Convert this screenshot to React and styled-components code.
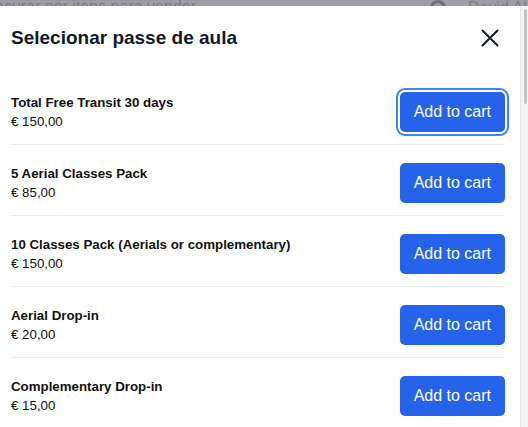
import React from 'react'
import styled, { createGlobalStyle } from 'styled-components'

const GlobalStyle = createGlobalStyle`
  html, body {
    margin: 0;
    padding: 0;
    background: #ffffff;
    font-family: "Liberation Sans", Arial, Helvetica, sans-serif;
  }
  * { box-sizing: border-box; }
`;

const Page = styled.div`
  width: 528px;
  height: 427px;
  overflow: hidden;
  display: flex;
  flex-direction: column;
  background: #9b9da4;
`;

const Backdrop = styled.div`
  height: 6px;
  flex: none;
  overflow: hidden;
  display: flex;
  align-items: flex-end;
  color: #7c7e86;
  font-size: 16px;
  line-height: 18px;
  filter: blur(0.5px);
  white-space: nowrap;
`;

const BackdropSearch = styled.span`
  margin-left: -5px;
  margin-bottom: -10px;
  flex: 1;
`;

const BackdropDot = styled.span`
  width: 16px;
  height: 16px;
  border-radius: 50%;
  border: 3px solid #6e7078;
  margin-bottom: -10px;
  margin-right: 22px;
`;

const BackdropUser = styled.span`
  margin-bottom: -11px;
  margin-right: -6px;
  width: 66px;
`;

const Modal = styled.div`
  flex: 1;
  display: flex;
  background: #ffffff;
  min-height: 0;
`;

const Content = styled.div`
  flex: 1;
  padding: 0 15px 0 11px;
`;

const ScrollTrack = styled.div`
  width: 8px;
  flex: none;
  background: #f4f4f5;
  border-left: 1px solid #e6e6e8;
  padding: 3px 1px 0 3px;
`;

const ScrollThumb = styled.div`
  height: 95px;
  border-radius: 3px;
  background: #c4c4c6;
`;

const Header = styled.div`
  display: flex;
  align-items: center;
  justify-content: space-between;
  height: 68px;
  padding-bottom: 4px;
`;

const Title = styled.h2`
  margin: 0;
  font-size: 19px;
  font-weight: 700;
  color: #111827;
`;

const CloseButton = styled.button`
  border: none;
  background: transparent;
  padding: 0;
  margin-right: 6px;
  display: flex;
  color: #111827;
  cursor: pointer;
`;

const List = styled.div`
  display: flex;
  flex-direction: column;
`;

const Row = styled.div`
  display: flex;
  align-items: center;
  justify-content: space-between;
  padding: 18px 0 12px;
  border-bottom: 1px solid ${p => (p.$last ? 'transparent' : '#ebebee')};
`;

const Info = styled.div`
  display: flex;
  flex-direction: column;
  font-size: 13.3px;
  line-height: 19.5px;
  color: #111111;
`;

const Name = styled.div`
  font-weight: 700;
`;

const Price = styled.div`
  font-weight: 400;
`;

const CartButton = styled.button`
  height: 40px;
  padding: 0 14px;
  border: none;
  border-radius: 5px;
  background: #2563eb;
  color: #ffffff;
  font-family: inherit;
  font-size: 16px;
  cursor: pointer;
  box-shadow: ${p => (p.$focused ? '0 0 0 2px #ffffff, 0 0 0 4px #3b82f6' : 'none')};
`;

const passes = [
  { name: 'Total Free Transit 30 days', price: '€ 150,00' },
  { name: '5 Aerial Classes Pack', price: '€ 85,00' },
  { name: '10 Classes Pack (Aerials or complementary)', price: '€ 150,00' },
  { name: 'Aerial Drop-in', price: '€ 20,00' },
  { name: 'Complementary Drop-in', price: '€ 15,00' },
];

const CloseIcon = () => (
  <svg width="18" height="18" viewBox="0 0 18 18" fill="none" stroke="currentColor" strokeWidth="2" strokeLinecap="round">
    <path d="M1.5 1.5 16.5 16.5M16.5 1.5 1.5 16.5" />
  </svg>
);

const App = () => {
  return (
    <Page>
      <GlobalStyle />
      <Backdrop>
        <BackdropSearch>ocurar por itens para vender</BackdropSearch>
        <BackdropDot />
        <BackdropUser>David Al</BackdropUser>
      </Backdrop>
      <Modal>
        <Content>
          <Header>
            <Title>Selecionar passe de aula</Title>
            <CloseButton aria-label="Fechar">
              <CloseIcon />
            </CloseButton>
          </Header>
          <List>
            {passes.map((pass, index) => (
              <Row key={pass.name} $last={index === passes.length - 1}>
                <Info>
                  <Name>{pass.name}</Name>
                  <Price>{pass.price}</Price>
                </Info>
                <CartButton $focused={index === 0}>Add to cart</CartButton>
              </Row>
            ))}
          </List>
        </Content>
        <ScrollTrack>
          <ScrollThumb />
        </ScrollTrack>
      </Modal>
    </Page>
  )
}

export default App
